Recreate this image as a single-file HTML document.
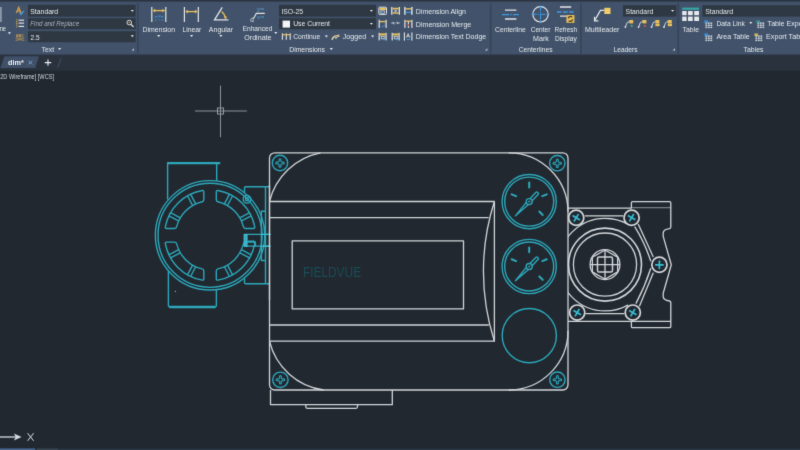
<!DOCTYPE html>
<html>
<head>
<meta charset="utf-8">
<title>dim</title>
<style>
html,body{margin:0;padding:0;background:#212830;overflow:hidden;}
body{width:800px;height:450px;position:relative;font-family:"Liberation Sans",sans-serif;}
svg{position:absolute;left:0;top:0;display:block;}
text{font-family:"Liberation Sans",sans-serif;}
.t{font-size:7.6px;fill:#e6eaee;}
.ti{font-size:7.6px;fill:#a9b3bf;font-style:italic;}
.tb{font-size:7.8px;fill:#f2f4f6;font-weight:bold;}
.tv{font-size:7px;fill:#d2d6da;}
.w{fill:none;stroke:#d2d5d8;stroke-width:1.3;}
.w2{fill:none;stroke:#d4d7da;stroke-width:1.6;}
.c{fill:none;stroke:#2ca7b9;stroke-width:1.4;}
.cb{fill:none;stroke:#3cc0d2;stroke-width:1.2;}
</style>
</head>
<body>
<svg width="800" height="450" viewBox="0 0 800 450">
<defs><filter id="soft" filterUnits="userSpaceOnUse" x="0" y="0" width="800" height="450" color-interpolation-filters="sRGB"><feConvolveMatrix order="3" kernelMatrix="0.0113 0.0838 0.0113 0.0838 0.6193 0.0838 0.0113 0.0838 0.0113" divisor="1" edgeMode="duplicate" preserveAlpha="true"/></filter></defs>
<g filter="url(#soft)">
<rect x="0" y="0" width="800" height="450" fill="#212830"/>
<rect x="0" y="0" width="800" height="54.8" fill="#41526a"/>
<rect x="0" y="0" width="800" height="1.6" fill="#2b3541"/>
<rect x="0" y="54.8" width="800" height="15.7" fill="#2a323d"/>
<rect x="137.0" y="3" width="1.8" height="51.8" fill="#384659"/>
<rect x="489.8" y="3" width="1.8" height="51.8" fill="#384659"/>
<rect x="580.0" y="3" width="1.8" height="51.8" fill="#384659"/>
<rect x="677.4" y="3" width="1.8" height="51.8" fill="#384659"/>
<rect x="28" y="4.8" width="107.6" height="11.8" fill="#2e3843"/>
<rect x="28" y="18.2" width="107.6" height="11.0" fill="#2e3843"/>
<rect x="28" y="31.2" width="107.6" height="11.0" fill="#2e3843"/>
<rect x="279" y="4.8" width="97" height="11.8" fill="#2e3843"/>
<rect x="279" y="18.2" width="97" height="11.0" fill="#2e3843"/>
<rect x="623" y="5.2" width="53.4" height="11.4" fill="#2e3843"/>
<rect x="702.4" y="5.2" width="98" height="11.4" fill="#2e3843"/>
<rect x="0" y="7" width="1.8" height="15" fill="#8c98a8"/>
<text class="t" x="-0.3" y="31.2" textLength="6.3" lengthAdjust="spacingAndGlyphs">ne</text>
<path d="M7.836 32.318H10.964L9.4 34.273Z" fill="#eef0f2"/>
<path d="M16.3 13.1L18.7 7.4L21.1 13.1M17.2 11.1H20.2" fill="none" stroke="#d3a04a" stroke-width="1.3"/>
<path d="M19.4 12.6L21 14.6L23.8 10.8" fill="none" stroke="#4a9fe2" stroke-width="1.2"/>
<rect x="18.6" y="19.599999999999998" width="5.4" height="1.2" fill="#dfe3e7"/>
<rect x="18.6" y="22.5" width="5.4" height="1.2" fill="#dfe3e7"/>
<rect x="18.6" y="25.799999999999997" width="5.4" height="1.2" fill="#dfe3e7"/>
<path d="M16.8 19.2V28" stroke="#c99a45" stroke-width="1.3" stroke-dasharray="1.2 0.6"/>
<text x="15.7" y="37" textLength="8.4" lengthAdjust="spacingAndGlyphs" style="font-size:4.2px;font-weight:bold;fill:#d3a04a">ABC</text>
<path d="M15.6 38.2H24.2" stroke="#c99a45" stroke-width="0.8"/>
<path d="M15.6 40.4Q19.9 38.8 24.2 40.4" fill="none" stroke="#c99a45" stroke-width="0.8"/>
<text class="t" x="30.3" y="13.5" textLength="27.8" lengthAdjust="spacingAndGlyphs">Standard</text>
<path d="M130.73600000000002 9.918H133.864L132.3 11.873Z" fill="#eef0f2"/>
<text class="ti" x="30.3" y="26.4" textLength="48.8" lengthAdjust="spacingAndGlyphs">Find and Replace</text>
<circle cx="129.3" cy="22.6" r="2.3" fill="none" stroke="#e0e3e6" stroke-width="1"/>
<circle cx="129.3" cy="22.6" r="0.8" fill="#d9a23f"/>
<path d="M131 24.4L133.6 27" stroke="#e0e3e6" stroke-width="1.3" fill="none"/>
<text class="t" x="30.6" y="39.6" textLength="9" lengthAdjust="spacingAndGlyphs">2.5</text>
<path d="M130.73600000000002 35.318H133.864L132.3 37.273Z" fill="#eef0f2"/>
<text class="t" x="41.5" y="52" textLength="12.6" lengthAdjust="spacingAndGlyphs">Text</text>
<path d="M58.036 48.018H61.164L59.6 49.973Z" fill="#eef0f2"/>
<path d="M134.0 48.199999999999996V50.6H131.60000000000002Z" fill="#c9d0d8"/>
<rect x="151.20000000000002" y="7" width="1.2" height="15" fill="#e3e6e9"/>
<rect x="165.20000000000002" y="7" width="1.2" height="15" fill="#e3e6e9"/>
<path d="M153.79999999999998 10.6H163.8" stroke="#e8c05a" stroke-width="1.3" fill="none"/>
<path d="M152.6 10.6L155.2 8.799999999999999V12.4Z M165 10.6L162.4 8.799999999999999V12.4Z" fill="#e8c05a"/>
<path d="M154.8 17.6l1.4-1.6l1.2 1.6M158.4 15.4l1 1.6l1-1.6M161 17.6l1.2-1.6l1.2 1.6M155 20h1.6M158.6 19l1.2 1.2M161.6 20h1.6" stroke="#3f9be6" stroke-width="1" fill="none"/>
<text class="t" x="142.5" y="31.6" textLength="32.5" lengthAdjust="spacingAndGlyphs">Dimension</text>
<path d="M157.186 35.018H160.314L158.75 36.973Z" fill="#eef0f2"/>
<rect x="183.8" y="7" width="1.2" height="15" fill="#e3e6e9"/>
<rect x="197.70000000000002" y="7" width="1.2" height="15" fill="#e3e6e9"/>
<path d="M186.39999999999998 11.6H196.3" stroke="#e8c05a" stroke-width="1.3" fill="none"/>
<path d="M185.2 11.6L187.79999999999998 9.799999999999999V13.4Z M197.5 11.6L194.9 9.799999999999999V13.4Z" fill="#e8c05a"/>
<text class="t" x="182.5" y="31.6" textLength="18.8" lengthAdjust="spacingAndGlyphs">Linear</text>
<path d="M190.036 35.018H193.164L191.6 36.973Z" fill="#eef0f2"/>
<path d="M222.2 7.4L214.5 19.9H228.4" fill="none" stroke="#e3e6e9" stroke-width="1.3"/>
<path d="M221.65 11.55A11.2 11.2 0 0 1 225.3 17.6" fill="none" stroke="#e8c05a" stroke-width="1.4"/>
<path d="M225.6 19.6L223.7 16.6L227 16.4Z" fill="#e8c05a"/>
<text class="t" x="208.8" y="31.6" textLength="24.2" lengthAdjust="spacingAndGlyphs">Angular</text>
<path d="M219.336 35.018H222.464L220.9 36.973Z" fill="#eef0f2"/>
<path d="M253.6 18.4L256.3 13.4H264.8" fill="none" stroke="#e3e6e9" stroke-width="1.1"/>
<text x="250.2" y="21.6" style="font-size:6.4px;fill:#e3e6e9">d</text>
<text x="256.8" y="11.4" textLength="7.6" lengthAdjust="spacingAndGlyphs" style="font-size:5.8px;fill:#4f9fd6">y=</text>
<text x="256.8" y="18.9" textLength="7.6" lengthAdjust="spacingAndGlyphs" style="font-size:5.8px;fill:#4f9fd6">x=</text>
<text class="t" x="242.5" y="31.4" textLength="30" lengthAdjust="spacingAndGlyphs">Enhanced</text>
<text class="t" x="244.25" y="40.1" textLength="27.3" lengthAdjust="spacingAndGlyphs">Ordinate</text>
<path d="M274.236 32.117999999999995H277.36400000000003L275.8 34.073Z" fill="#eef0f2"/>
<text class="t" x="281.4" y="13.5" textLength="21.6" lengthAdjust="spacingAndGlyphs">ISO-25</text>
<path d="M369.83599999999996 9.918H372.964L371.4 11.873Z" fill="#eef0f2"/>
<rect x="282.6" y="20.6" width="7.4" height="7" fill="#f4f5f6"/>
<text class="t" x="293.2" y="26.4" textLength="36.8" lengthAdjust="spacingAndGlyphs">Use Current</text>
<path d="M369.83599999999996 22.918H372.964L371.4 24.872999999999998Z" fill="#eef0f2"/>
<rect x="281.84999999999997" y="33.3" width="1.1" height="6.5" fill="#e3e6e9"/>
<rect x="285.75" y="33.3" width="1.1" height="6.5" fill="#e3e6e9"/>
<rect x="289.65" y="33.3" width="1.1" height="6.5" fill="#e3e6e9"/>
<path d="M282.4 34.7H290.2" stroke="#e8c05a" stroke-width="1.2"/>
<text class="t" x="293.2" y="39.4" textLength="27" lengthAdjust="spacingAndGlyphs">Continue</text>
<path d="M324.83599999999996 35.518H327.964L326.4 37.473Z" fill="#eef0f2"/>
<path d="M331.8 39.6A5 5 0 0 1 339.6 36.6" fill="none" stroke="#e8c05a" stroke-width="1.2"/>
<path d="M332 40L334.6 36.2L336 38.6L338.8 34.4" fill="none" stroke="#e3e6e9" stroke-width="0.9"/>
<text class="t" x="342.8" y="39.4" textLength="23.4" lengthAdjust="spacingAndGlyphs">Jogged</text>
<path d="M371.036 35.518H374.16400000000004L372.6 37.473Z" fill="#eef0f2"/>
<rect x="378.9" y="7.2" width="7.6" height="7.2" rx="0.8" fill="none" stroke="#e3e6e9" stroke-width="1"/>
<rect x="379.6" y="7.9" width="6.2" height="2.1" fill="#e8c05a"/>
<rect x="380.8" y="10.8" width="3.8" height="2.4" fill="none" stroke="#e3e6e9" stroke-width="0.7"/>
<rect x="381.9" y="11.4" width="1.6" height="1.2" fill="#3f9be6"/>
<rect x="391.15000000000003" y="7" width="1.3" height="7.699999999999999" fill="#e3e6e9"/>
<rect x="398.65000000000003" y="7" width="1.3" height="7.699999999999999" fill="#e3e6e9"/>
<path d="M392.6 8.7H398.6M392.6 13H398.6" stroke="#e8c05a" stroke-width="1.7"/>
<rect x="394.4" y="10" width="2.4" height="1.8" fill="#9fc4e4"/>
<rect x="404.2" y="6.9" width="1.4" height="7.9" fill="#e3e6e9"/>
<rect x="411.2" y="6.9" width="1.4" height="7.9" fill="#e3e6e9"/>
<path d="M405.6 8.8H411.2" stroke="#e8c05a" stroke-width="1.4"/>
<path d="M405.8 12.4H411" stroke="#3f9be6" stroke-width="1.1"/>
<rect x="378.59999999999997" y="19.8" width="1.2" height="8.099999999999998" fill="#e3e6e9"/>
<rect x="385.5" y="19.8" width="1.2" height="8.099999999999998" fill="#e3e6e9"/>
<path d="M379.8 21.6H385.6" stroke="#e8c05a" stroke-width="1.4"/>
<path d="M381.6 26.6Q383 27.4 384.6 25" fill="none" stroke="#3f9be6" stroke-width="1"/>
<path d="M391.2 23H393.6M397.4 23H399.8" stroke="#c3cad2" stroke-width="0.9"/>
<path d="M395 23L392.8 21.8V24.2ZM396 23L398.2 21.8V24.2Z" fill="#c3cad2"/>
<path d="M393.8 25L397 21.2" stroke="#8fa0b2" stroke-width="0.6"/>
<rect x="404.29999999999995" y="19.8" width="1.2" height="8.099999999999998" fill="#e3e6e9"/>
<rect x="407.84999999999997" y="21" width="1.1" height="6.899999999999999" fill="#e3e6e9"/>
<rect x="411.29999999999995" y="19.8" width="1.2" height="8.099999999999998" fill="#e3e6e9"/>
<path d="M405.4 21.2H411.4" stroke="#e8c05a" stroke-width="1.3"/>
<rect x="407.7" y="24.2" width="1.4" height="1.8" fill="#d4603f"/>
<rect x="378.59999999999997" y="32.8" width="1.2" height="7.600000000000001" fill="#e3e6e9"/>
<rect x="385.49999999999994" y="32.8" width="1.2" height="7.600000000000001" fill="#e3e6e9"/>
<rect x="379.59999999999997" y="33.4" width="6.1" height="2.1" fill="#e8c05a"/>
<rect x="381.2" y="36.6" width="3" height="2.2" fill="none" stroke="#e3e6e9" stroke-width="0.7"/>
<path d="M382.59999999999997 39.6H385.4" stroke="#3f9be6" stroke-width="1"/>
<rect x="391.59999999999997" y="32.8" width="1.2" height="7.600000000000001" fill="#e3e6e9"/>
<rect x="398.49999999999994" y="32.8" width="1.2" height="7.600000000000001" fill="#e3e6e9"/>
<rect x="392.59999999999997" y="33.4" width="6.1" height="2.1" fill="#e8c05a"/>
<rect x="394.2" y="36.6" width="3" height="2.2" fill="none" stroke="#e3e6e9" stroke-width="0.7"/>
<path d="M395.59999999999997 39.6H398.4" stroke="#3f9be6" stroke-width="1"/>
<rect x="403.84999999999997" y="32.4" width="1.1" height="8.200000000000003" fill="#e3e6e9"/>
<rect x="411.34999999999997" y="32.4" width="1.1" height="8.200000000000003" fill="#e3e6e9"/>
<path d="M406.4 37.6L408.1 33.6L409.8 37.6M407 36.3H409.2" fill="none" stroke="#e3e6e9" stroke-width="0.8"/>
<path d="M406.6 39.4H410" stroke="#3f9be6" stroke-width="1"/>
<text class="t" x="415.8" y="13.6" textLength="50.2" lengthAdjust="spacingAndGlyphs">Dimension Align</text>
<text class="t" x="415.8" y="26.5" textLength="55.5" lengthAdjust="spacingAndGlyphs">Dimension Merge</text>
<text class="t" x="415.8" y="39.4" textLength="70.4" lengthAdjust="spacingAndGlyphs">Dimension Text Dodge</text>
<text class="t" x="289.2" y="52" textLength="35.8" lengthAdjust="spacingAndGlyphs">Dimensions</text>
<path d="M329.736 48.018H332.86400000000003L331.3 49.973Z" fill="#eef0f2"/>
<path d="M487.4 48.199999999999996V50.6H485.0Z" fill="#c9d0d8"/>
<path d="M505 10.2H516.4M505 19H516.4" stroke="#e3e6e9" stroke-width="1.3"/>
<path d="M502 14.6H519" stroke="#3f9be6" stroke-width="1.3" stroke-dasharray="7 1.2 1.6 1.2"/>
<text class="t" x="495.0" y="31.6" textLength="30.8" lengthAdjust="spacingAndGlyphs">Centerline</text>
<circle cx="540.5" cy="14.3" r="7.7" fill="none" stroke="#e3e6e9" stroke-width="1.2"/>
<path d="M540.5 5.4V23.2M531.6 14.3H549.4" stroke="#3f9be6" stroke-width="1.1" stroke-dasharray="5.4 1 1.2 1"/>
<text class="t" x="530.7" y="31.6" textLength="19.8" lengthAdjust="spacingAndGlyphs">Center</text>
<text class="t" x="533.0" y="40.5" textLength="15.8" lengthAdjust="spacingAndGlyphs">Mark</text>
<path d="M560 7H571.2M560 16.2H566.6" stroke="#e3e6e9" stroke-width="1.3"/>
<path d="M557 12H574.2" stroke="#3f9be6" stroke-width="1.3" stroke-dasharray="4.6 1.4"/>
<rect x="566.4" y="15" width="8" height="7.8" fill="#e8c05a"/>
<path d="M568.2 18.4a2.3 2.3 0 0 1 4-1.2M572.6 19.4a2.3 2.3 0 0 1 -4 1.2" fill="none" stroke="#4a3d24" stroke-width="1.3"/>
<text class="t" x="554.55" y="31.6" textLength="22.5" lengthAdjust="spacingAndGlyphs">Refresh</text>
<text class="t" x="555.0" y="40.5" textLength="21.8" lengthAdjust="spacingAndGlyphs">Display</text>
<text class="t" x="518.7" y="52" textLength="33.8" lengthAdjust="spacingAndGlyphs">Centerlines</text>
<rect x="604.3" y="7.8" width="6.2" height="6.2" fill="#f0cd68"/>
<path d="M604.2 10.4H600.4L594.8 20.4" fill="none" stroke="#e3e6e9" stroke-width="1.2"/>
<path d="M594.5 16.8V20.8H598.4" fill="none" stroke="#e3e6e9" stroke-width="1.2"/>
<text class="t" x="584.95" y="31.6" textLength="34.5" lengthAdjust="spacingAndGlyphs">Multileader</text>
<text class="t" x="625.6" y="13.6" textLength="27.6" lengthAdjust="spacingAndGlyphs">Standard</text>
<path d="M671.0360000000001 9.918H674.164L672.6 11.873Z" fill="#eef0f2"/>
<path d="M625.4 27.0L627.0 22.8Q627.6 21.8 629.4 21.8" fill="none" stroke="#e3e6e9" stroke-width="0.9"/>
<rect x="629.1999999999999" y="20.0" width="4" height="3.4" fill="#e8c05a"/>
<circle cx="625.4" cy="27.0" r="0.9" fill="#dfe6ee"/>
<rect x="630.8" y="25.0" width="1.8" height="1.8" fill="#3fbf6a"/>
<path d="M638.6 27.0L640.2 22.8Q640.8000000000001 21.8 642.6 21.8" fill="none" stroke="#e3e6e9" stroke-width="0.9"/>
<rect x="642.4" y="20.0" width="4" height="3.4" fill="#e8c05a"/>
<circle cx="638.6" cy="27.0" r="0.9" fill="#dfe6ee"/>
<rect x="644.0" y="25.0" width="1.8" height="1.8" fill="#e0553f"/>
<path d="M651.6 27.0L653.2 22.8Q653.8000000000001 21.8 655.6 21.8" fill="none" stroke="#e3e6e9" stroke-width="0.9"/>
<rect x="655.4" y="20.0" width="4" height="3.4" fill="#e8c05a"/>
<circle cx="651.6" cy="27.0" r="0.9" fill="#dfe6ee"/>
<rect x="655.4" y="23.6" width="4.2" height="2.6" fill="#e8c05a"/>
<path d="M664 27.0L665.6 22.8Q666.2 21.8 668 21.8" fill="none" stroke="#e3e6e9" stroke-width="0.9"/>
<rect x="667.8" y="20.0" width="4" height="3.4" fill="#e8c05a"/>
<circle cx="664" cy="27.0" r="0.9" fill="#dfe6ee"/>
<rect x="667.8" y="23.6" width="4.2" height="2.6" fill="#e8c05a"/>
<text class="t" x="613.7" y="52" textLength="23.8" lengthAdjust="spacingAndGlyphs">Leaders</text>
<path d="M675.0 48.199999999999996V50.6H672.5999999999999Z" fill="#c9d0d8"/>
<rect x="682.2" y="7.6" width="16.8" height="2.2" fill="#36a7a3"/>
<rect x="682.2" y="11" width="4.4" height="4.2" fill="#e6e9ec"/>
<rect x="682.2" y="16.6" width="4.4" height="4.4" fill="#e6e9ec"/>
<rect x="688" y="11" width="4.7" height="4.2" fill="#e6e9ec"/>
<rect x="688" y="16.6" width="4.7" height="4.4" fill="#e6e9ec"/>
<rect x="694.2" y="11" width="4.8" height="4.2" fill="#e6e9ec"/>
<rect x="694.2" y="16.6" width="4.8" height="4.4" fill="#e6e9ec"/>
<text class="t" x="682.6" y="31.6" textLength="16.4" lengthAdjust="spacingAndGlyphs">Table</text>
<text class="t" x="705.2" y="13.6" textLength="27.8" lengthAdjust="spacingAndGlyphs">Standard</text>
<rect x="705.4" y="22.4" width="1.8" height="1.5" fill="#cfd4da"/>
<rect x="705.4" y="24.5" width="1.8" height="1.5" fill="#cfd4da"/>
<rect x="705.4" y="26.599999999999998" width="1.8" height="1.5" fill="#cfd4da"/>
<rect x="707.9" y="22.4" width="1.8" height="1.5" fill="#cfd4da"/>
<rect x="707.9" y="24.5" width="1.8" height="1.5" fill="#cfd4da"/>
<rect x="707.9" y="26.599999999999998" width="1.8" height="1.5" fill="#cfd4da"/>
<rect x="710.4" y="22.4" width="1.8" height="1.5" fill="#cfd4da"/>
<rect x="710.4" y="24.5" width="1.8" height="1.5" fill="#cfd4da"/>
<rect x="710.4" y="26.599999999999998" width="1.8" height="1.5" fill="#cfd4da"/>
<rect x="704.4" y="20.4" width="3.6" height="2.6" fill="#3f9be6" fill-opacity="0.85"/>
<text class="t" x="716.4" y="26.4" textLength="28.6" lengthAdjust="spacingAndGlyphs">Data Link</text>
<path d="M749.236 22.118H752.3639999999999L750.8 24.073Z" fill="#eef0f2"/>
<rect x="757.4" y="22.4" width="1.8" height="1.5" fill="#cfd4da"/>
<rect x="757.4" y="24.5" width="1.8" height="1.5" fill="#cfd4da"/>
<rect x="757.4" y="26.599999999999998" width="1.8" height="1.5" fill="#cfd4da"/>
<rect x="759.9" y="22.4" width="1.8" height="1.5" fill="#cfd4da"/>
<rect x="759.9" y="24.5" width="1.8" height="1.5" fill="#cfd4da"/>
<rect x="759.9" y="26.599999999999998" width="1.8" height="1.5" fill="#cfd4da"/>
<rect x="762.4" y="22.4" width="1.8" height="1.5" fill="#cfd4da"/>
<rect x="762.4" y="24.5" width="1.8" height="1.5" fill="#cfd4da"/>
<rect x="762.4" y="26.599999999999998" width="1.8" height="1.5" fill="#cfd4da"/>
<rect x="756.4" y="20.4" width="3.6" height="2.6" fill="#36a7a3" fill-opacity="0.85"/>
<text class="t" x="767.6" y="26.4" textLength="39.4" lengthAdjust="spacingAndGlyphs">Table Export</text>
<rect x="705.4" y="35.4" width="1.8" height="1.5" fill="#cfd4da"/>
<rect x="705.4" y="37.5" width="1.8" height="1.5" fill="#cfd4da"/>
<rect x="705.4" y="39.6" width="1.8" height="1.5" fill="#cfd4da"/>
<rect x="707.9" y="35.4" width="1.8" height="1.5" fill="#cfd4da"/>
<rect x="707.9" y="37.5" width="1.8" height="1.5" fill="#cfd4da"/>
<rect x="707.9" y="39.6" width="1.8" height="1.5" fill="#cfd4da"/>
<rect x="710.4" y="35.4" width="1.8" height="1.5" fill="#cfd4da"/>
<rect x="710.4" y="37.5" width="1.8" height="1.5" fill="#cfd4da"/>
<rect x="710.4" y="39.6" width="1.8" height="1.5" fill="#cfd4da"/>
<rect x="704.4" y="33.4" width="3.6" height="2.6" fill="#3f9be6" fill-opacity="0.85"/>
<text class="t" x="716.4" y="39.4" textLength="33.2" lengthAdjust="spacingAndGlyphs">Area Table</text>
<rect x="755.4" y="35.4" width="1.8" height="1.5" fill="#cfd4da"/>
<rect x="755.4" y="37.5" width="1.8" height="1.5" fill="#cfd4da"/>
<rect x="755.4" y="39.6" width="1.8" height="1.5" fill="#cfd4da"/>
<rect x="757.9" y="35.4" width="1.8" height="1.5" fill="#cfd4da"/>
<rect x="757.9" y="37.5" width="1.8" height="1.5" fill="#cfd4da"/>
<rect x="757.9" y="39.6" width="1.8" height="1.5" fill="#cfd4da"/>
<rect x="760.4" y="35.4" width="1.8" height="1.5" fill="#cfd4da"/>
<rect x="760.4" y="37.5" width="1.8" height="1.5" fill="#cfd4da"/>
<rect x="760.4" y="39.6" width="1.8" height="1.5" fill="#cfd4da"/>
<rect x="754.4" y="33.4" width="3.6" height="2.6" fill="#e8c05a" fill-opacity="0.85"/>
<text class="t" x="766" y="39.4" textLength="39.8" lengthAdjust="spacingAndGlyphs">Export Table</text>
<text class="t" x="743.6" y="52" textLength="19.8" lengthAdjust="spacingAndGlyphs">Tables</text>
<path d="M4.4 56.2H38.9L35.3 68.1H0.4Z" fill="#3f5068"/>
<text class="tb" x="8" y="65.3" textLength="15.8" lengthAdjust="spacingAndGlyphs">dim*</text>
<path d="M28.6 60.8L32.2 64.4M32.2 60.8L28.6 64.4" stroke="#7fabd6" stroke-width="1"/>
<path d="M44.8 62.6H51.2M48 59.4V65.8" stroke="#eef0f2" stroke-width="1.1"/>
<path d="M61 58.2L57.6 67.4" stroke="#465363" stroke-width="0.9"/>
<text class="tv" x="0.2" y="79.3" textLength="53.8" lengthAdjust="spacingAndGlyphs">2D Wireframe] [WCS]</text>
<path d="M220.5 85.6V137.2M195 111H246.8" stroke="#8f9397" stroke-width="1" fill="none"/>
<rect x="217.5" y="108" width="6" height="6" stroke="#979b9f" stroke-width="1" fill="none"/>
<path d="M0 437H17" stroke="#d6dade" stroke-width="1.3"/>
<path d="M21.6 437L13.8 433.6L15.8 437L13.8 440.4Z" fill="#d6dade"/>
<path d="M27.6 433.2L33.6 440.8M33.6 433.2L27.6 440.8" stroke="#dde0e3" stroke-width="1"/>
<rect x="0" y="448.6" width="800" height="1.4" fill="#2a3742"/>
<rect x="0" y="448.4" width="35" height="1.6" fill="#47648d"/>
<rect x="37" y="448.6" width="21" height="1.4" fill="#3a4652"/>
<!--DRAWING-->
<g class="c" stroke-linejoin="round">
<path d="M167.6 199.6V163.4M216.7 163.4V180.8"/>
<path d="M167 163.1H220.2" stroke-width="2.3"/>
<path d="M168.4 271V305.6Q168.4 307 169.8 307H215Q216.4 307 216.4 305.6V289.8"/>
<path d="M169.4 307.1H215.4" stroke-width="2.5"/>
<circle cx="210.05" cy="235.3" r="54.7"/>
<circle cx="210.05" cy="235.3" r="52.05"/>
<path d="M202.22 190.48A45.5 45.5 0 0 0 165.33 226.92Q165.06 228.50 166.66 228.50L174.63 228.50Q176.23 228.50 176.58 226.94A34.5 34.5 0 0 1 202.23 201.70Q203.80 201.37 203.80 199.77L203.80 191.83Q203.80 190.23 202.22 190.48Z"/>
<path d="M192.57 205.51L187.49 195.75"/>
<path d="M195.67 203.89L190.59 194.13"/>
<path d="M178.64 220.92L168.88 215.84"/>
<path d="M180.26 217.82L170.50 212.74"/>
<path d="M202.22 280.12A45.5 45.5 0 0 1 165.33 243.68Q165.06 242.10 166.66 242.10L174.63 242.10Q176.23 242.10 176.58 243.66A34.5 34.5 0 0 0 202.23 268.90Q203.80 269.23 203.80 270.83L203.80 278.77Q203.80 280.37 202.22 280.12Z"/>
<path d="M195.67 266.71L190.59 276.47"/>
<path d="M192.57 265.09L187.49 274.85"/>
<path d="M180.26 252.78L170.50 257.86"/>
<path d="M178.64 249.68L168.88 254.76"/>
<path d="M217.88 190.48A45.5 45.5 0 0 1 254.77 226.92Q255.04 228.50 253.44 228.50L245.47 228.50Q243.87 228.50 243.52 226.94A34.5 34.5 0 0 0 217.87 201.70Q216.30 201.37 216.30 199.77L216.30 191.83Q216.30 190.23 217.88 190.48Z"/>
<path d="M224.43 203.89L229.51 194.13"/>
<path d="M227.53 205.51L232.61 195.75"/>
<path d="M239.84 217.82L249.60 212.74"/>
<path d="M241.46 220.92L251.22 215.84"/>
<path d="M217.88 280.12A45.5 45.5 0 0 0 254.77 243.68Q255.04 242.10 253.44 242.10L245.47 242.10Q243.87 242.10 243.52 243.66A34.5 34.5 0 0 1 217.87 268.90Q216.30 269.23 216.30 270.83L216.30 278.77Q216.30 280.37 217.88 280.12Z"/>
<path d="M227.53 265.09L232.61 274.85"/>
<path d="M224.43 266.71L229.51 276.47"/>
<path d="M241.46 249.68L251.22 254.76"/>
<path d="M239.84 252.78L249.60 257.86"/>
<path d="M244.5 192.4V187.9Q244.5 186.8 245.6 186.8H270"/>
<path d="M244.5 278.2V282.6Q244.5 283.7 245.6 283.7H270"/>
<path d="M265.5 186.8V283.7"/>
<path d="M265.5 211.2H261.4V260.5H265.5"/>
<circle cx="247" cy="199.3" r="3.8"/>
<circle cx="247" cy="199.3" r="1.5"/>
</g>
<g class="cb">
<path d="M244.2 234.3H270.5M244.2 246.2H270.5" stroke="#2fa8ba"/><path d="M261 234.3H270.5M261 246.2H270.5"/>
<rect x="244.2" y="234.6" width="2.8" height="11.6" fill="#45bcd6" fill-opacity="0.85"/>
<path d="M247.6 241.2H253.6Q255.4 241.2 255.4 243V246.2" class="c"/>
</g>
<rect x="174.9" y="290.9" width="1" height="1" fill="#c9cdd1"/>
<g class="w" stroke-linejoin="round">
<rect x="269.5" y="152.8" width="298.5" height="237.2" rx="5.2" ry="5.2"/>
<path d="M269.5 201.5A65.4 65.4 0 0 1 320.5 152.8"/>
<path d="M508.6 152.8A59.2 59.2 0 0 1 568 211.8"/>
<path d="M568 330.8A59.2 59.2 0 0 1 508.8 390"/>
<path d="M269.5 341.2A64.5 64.5 0 0 0 323.6 390"/>
<path d="M269.5 201.5H494.4V341.2H269.5"/>
<path d="M494.4 201.5A228 228 0 0 0 494.4 341.2"/>
<path d="M269.5 217.7H488.6M269.5 325H488.8"/>
<rect x="292.2" y="240.9" width="171.3" height="68"/>
<path d="M270.5 390V404.7H392.3V390"/>
<path d="M305.8 404.7V406.8Q305.8 408.3 307.3 408.3H356Q357.5 408.3 357.5 406.8V404.7"/>
</g>
<text x="302.9" y="276.9" textLength="58.2" lengthAdjust="spacingAndGlyphs" style="font-size:13.9px;fill:#1b4c57;">FIELDVUE</text>
<circle class="c" cx="280.0" cy="163" r="7.7"/>
<path d="M276.7 163H283.3M280.0 159.7V166.3" stroke="#2ba6b8" stroke-width="3" stroke-linecap="round" fill="none"/>
<path d="M276.9 163H283.1M280.0 159.9V166.1" stroke="#212830" stroke-width="0.9" stroke-linecap="round" fill="none" stroke-opacity="0.75"/>
<circle cx="280.0" cy="163" r="1.3" fill="#212830"/>
<circle class="c" cx="557.3" cy="163.2" r="7.7"/>
<path d="M554.0 163.2H560.5999999999999M557.3 159.89999999999998V166.5" stroke="#2ba6b8" stroke-width="3" stroke-linecap="round" fill="none"/>
<path d="M554.1999999999999 163.2H560.4M557.3 160.1V166.29999999999998" stroke="#212830" stroke-width="0.9" stroke-linecap="round" fill="none" stroke-opacity="0.75"/>
<circle cx="557.3" cy="163.2" r="1.3" fill="#212830"/>
<circle class="c" cx="280.4" cy="379.8" r="7.7"/>
<path d="M277.09999999999997 379.8H283.7M280.4 376.5V383.1" stroke="#2ba6b8" stroke-width="3" stroke-linecap="round" fill="none"/>
<path d="M277.29999999999995 379.8H283.5M280.4 376.7V382.90000000000003" stroke="#212830" stroke-width="0.9" stroke-linecap="round" fill="none" stroke-opacity="0.75"/>
<circle cx="280.4" cy="379.8" r="1.3" fill="#212830"/>
<circle class="c" cx="557.4" cy="379.7" r="7.7"/>
<path d="M554.1 379.7H560.6999999999999M557.4 376.4V383.0" stroke="#2ba6b8" stroke-width="3" stroke-linecap="round" fill="none"/>
<path d="M554.3 379.7H560.5M557.4 376.59999999999997V382.8" stroke="#212830" stroke-width="0.9" stroke-linecap="round" fill="none" stroke-opacity="0.75"/>
<circle cx="557.4" cy="379.7" r="1.3" fill="#212830"/>
<circle class="c" cx="529.2" cy="201.6" r="27.1"/>
<circle class="c" cx="529.2" cy="201.6" r="24.5"/>
<path d="M529.20 187.40L529.20 182.60" stroke="#2eaabb" stroke-width="2" stroke-linecap="round" fill="none"/>
<path d="M516.08 196.17L511.65 194.33" stroke="#2eaabb" stroke-width="2" stroke-linecap="round" fill="none"/>
<path d="M542.32 196.17L546.75 194.33" stroke="#2eaabb" stroke-width="2" stroke-linecap="round" fill="none"/>
<path d="M539.33 211.55L542.75 214.92" stroke="#2eaabb" stroke-width="2" stroke-linecap="round" fill="none"/>
<path class="c" stroke-linejoin="round" d="M526.31 202.43L515.45 215.84L528.47 204.51"/>
<path class="c" stroke-linejoin="round" d="M529.93 198.69L536.04 192.36Q536.73 191.64 537.45 192.33L538.17 193.03Q538.89 193.72 538.20 194.44L532.09 200.77"/>
<circle class="c" cx="529.2" cy="201.6" r="3"/>
<circle cx="529.2" cy="201.6" r="1.1" fill="#2aa0b1"/>
<circle class="c" cx="529.2" cy="266.5" r="27.1"/>
<circle class="c" cx="529.2" cy="266.5" r="24.5"/>
<path d="M529.20 252.30L529.20 247.50" stroke="#2eaabb" stroke-width="2" stroke-linecap="round" fill="none"/>
<path d="M516.08 261.07L511.65 259.23" stroke="#2eaabb" stroke-width="2" stroke-linecap="round" fill="none"/>
<path d="M542.32 261.07L546.75 259.23" stroke="#2eaabb" stroke-width="2" stroke-linecap="round" fill="none"/>
<path d="M539.33 276.45L542.75 279.82" stroke="#2eaabb" stroke-width="2" stroke-linecap="round" fill="none"/>
<path class="c" stroke-linejoin="round" d="M526.31 267.33L515.45 280.74L528.47 269.41"/>
<path class="c" stroke-linejoin="round" d="M529.93 263.59L536.04 257.26Q536.73 256.54 537.45 257.23L538.17 257.93Q538.89 258.62 538.20 259.34L532.09 265.67"/>
<circle class="c" cx="529.2" cy="266.5" r="3"/>
<circle cx="529.2" cy="266.5" r="1.1" fill="#2aa0b1"/>
<circle class="c" cx="529.3" cy="335.6" r="27.1"/>
<g class="w" stroke-linejoin="round">
<path d="M568 208.1H631.4M568 321.4H670.8"/>
<path d="M584.6 215.8H623.4M585.4 313.6H624.4"/>
<path d="M631.4 208.6V202.8Q631.4 201.6 632.6 201.6H669.6Q670.8 201.6 670.8 202.8V227Q670.8 228.4 669.4 228.6Q663.2 229.4 663.2 233V236.4L671.3 264.8L663.2 293.2V296.6Q663.2 300.2 669.4 301Q670.8 301.2 670.8 302.6V326.4Q670.8 327.6 669.6 327.6H632.6Q631.4 327.6 631.4 326.4V321.4"/>
<path d="M631.4 207.6H670.8" stroke-opacity="0.5"/>
<clipPath id="blk"><rect x="568" y="200" width="60" height="130"/></clipPath>
<circle cx="605.0" cy="264.6" r="46.3" clip-path="url(#blk)"/>
<circle cx="605.0" cy="264.6" r="31.6"/>
<circle cx="605.0" cy="264.6" r="14.9"/>
<polygon points="605.00,279.20 592.36,271.90 592.36,257.30 605.00,250.00 617.64,257.30 617.64,271.90"/>
<rect x="597.5" y="257.1" width="15" height="15" rx="1.6" stroke-width="1.5"/>
<path d="M605.0 249.70000000000002V279.5M590.1 264.6H619.9"/>
<path d="M638.2 224L653.3 256.9M634.7 226.7Q644.9 243 650.8 261.3"/>
<path d="M639.4 306.3L653.3 272.7M635.9 303.6Q644.9 286.6 650.8 268.3"/>
</g>
<circle class="w2" cx="605.0" cy="264.6" r="36.5" stroke-width="2.1"/>
<circle cx="576.2" cy="217.8" r="7.6" fill="#212830" stroke="#d4d7da" stroke-width="1.7"/>
<path d="M571.9000000000001 217.8H580.5M576.2 213.5V222.10000000000002" stroke="#36bdd2" stroke-width="1.7" fill="none" transform="rotate(32 576.2 217.8)"/>
<circle cx="631.6" cy="217.7" r="7.6" fill="#212830" stroke="#d4d7da" stroke-width="1.7"/>
<path d="M627.3000000000001 217.7H635.9M631.6 213.39999999999998V222.0" stroke="#36bdd2" stroke-width="1.7" fill="none" transform="rotate(30 631.6 217.7)"/>
<circle cx="659.4" cy="264.8" r="7.6" fill="#212830" stroke="#d4d7da" stroke-width="1.7"/>
<path d="M655.1 264.8H663.6999999999999M659.4 260.5V269.1" stroke="#36bdd2" stroke-width="1.7" fill="none" transform="rotate(0 659.4 264.8)"/>
<circle cx="577.2" cy="312.6" r="7.6" fill="#212830" stroke="#d4d7da" stroke-width="1.7"/>
<path d="M572.9000000000001 312.6H581.5M577.2 308.3V316.90000000000003" stroke="#36bdd2" stroke-width="1.7" fill="none" transform="rotate(30 577.2 312.6)"/>
<circle cx="632.8" cy="312.6" r="7.6" fill="#212830" stroke="#d4d7da" stroke-width="1.7"/>
<path d="M628.5 312.6H637.0999999999999M632.8 308.3V316.90000000000003" stroke="#36bdd2" stroke-width="1.7" fill="none" transform="rotate(30 632.8 312.6)"/>
<path class="w" d="M269.5 185V300"/>
</g>
</svg>
</body>
</html>
